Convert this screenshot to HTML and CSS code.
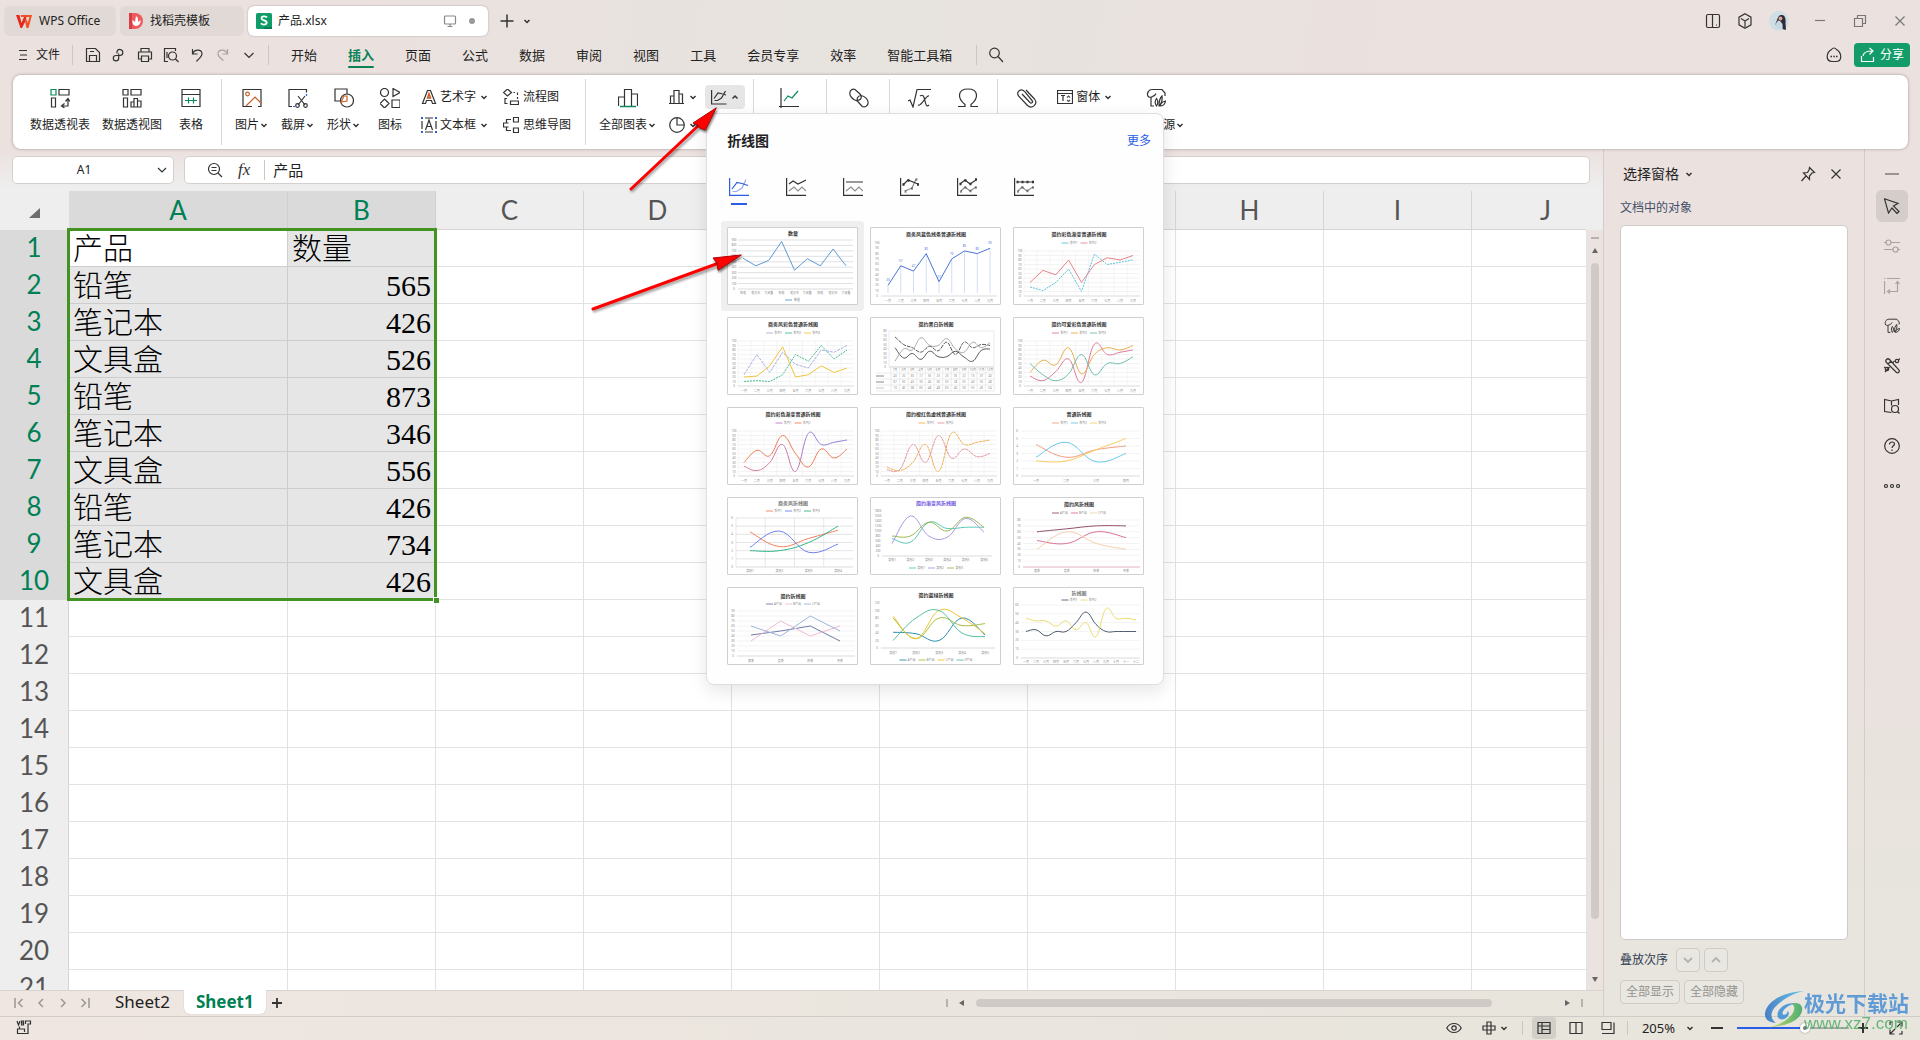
FILE: index.html
```html
<!DOCTYPE html>
<html lang="zh-CN">
<head>
<meta charset="utf-8">
<title>产品.xlsx - WPS Office</title>
<link rel="stylesheet" href="styles.css">
</head>
<body>
<svg class="defs" aria-hidden="true">
  <symbol id="chev" viewBox="0 0 10 10"><path d="M2.500 4l2.500 2.500L7.500 4" stroke-width="1.500"/></symbol>
  <symbol id="chev-up" viewBox="0 0 10 10"><path d="M2.500 6.500L5 4l2.500 2.500" stroke-width="1.500"/></symbol>
  <symbol id="chev-lg" viewBox="0 0 16 16"><path d="M3.500 6L8 10.500 12.500 6"/></symbol>
  <symbol id="close" viewBox="0 0 16 16"><path d="M3.500 3.500l9 9M12.500 3.500l-9 9"/></symbol>
  <symbol id="resource" viewBox="0 0 20 20"><path d="M5 9.500V18h3M2.500 9C0 6 2.500 1.500 6 1.500h10l3 3.500v3M6.500 8.500C5 10 3 9.500 2 8M10 5.500c-1 2-2 3-4 3M10.500 18c-2-3-1.500-5.500 0-7.500 1.500 2 2 4.500 0 7.500zM13 17.500c0-4 .500-7 3-9.500.500 4-.500 7.500-3 9.500zM14 18c1-3 3-4.500 5.500-5-.500 3-2.500 5-5.500 5z"/></symbol>
</svg>

<header class="titlebar">
  <button class="doc-tab doc-tab-home"><svg class="i16" viewBox="0 0 16 16"><path d="M0 2h3.500l2 8L8 4h2.500L9 9l-3 6H4.500z" fill="#e8281c" stroke="none"/><path d="M5 2h11l-3.500 13h-2L9 8l1.500-2 1.200 4L13.500 4H5z" fill="#f4501f" stroke="none"/></svg>WPS Office</button>
  <button class="doc-tab doc-tab-docer"><svg class="i16" viewBox="0 0 16 16"><path d="M1 0h6a8 8 0 0 1 0 16H1z" fill="#f05a5e" stroke="none"/><path d="M1 0h3v16H1z" fill="#d93c44" stroke="none"/><path d="M8 3l2 2v4l2.500-2c.500 3-1 5.500-4.500 6-3-.500-4-3-3.500-6L7 9z" fill="#fff" stroke="none"/></svg>找稻壳模板</button>
  <div class="doc-tab doc-tab-active"><svg class="i16" viewBox="0 0 16 16"><rect width="16" height="16" rx="1.500" fill="#109c68" stroke="none"/><path d="M8 14h8v2H8z" fill="#0b7d50" stroke="none"/><path d="M11 4.500C10 3 5.500 2.800 5.500 5.300c0 2.600 5.200 1.600 5.200 4.300 0 2.500-4.500 2.400-5.700.700" stroke="#fff" stroke-width="1.800"/></svg>产品.xlsx
    <svg class="i14 push" viewBox="0 0 14 14"><rect x="1.500" y="2" width="11" height="8" rx="1" stroke="#888"/><path d="M4.500 12.500h5M7 10v2" stroke="#888"/></svg><span class="dot"></span></div>
  <button class="plain" aria-label="新建"><svg class="i16" viewBox="0 0 16 16"><path d="M8 1.500v13M1.500 8h13" stroke-width="1.500"/></svg></button>
  <button class="plain" aria-label="标签列表"><svg class="i10"><use href="#chev"/></svg></button>
  <div class="win">
    <button class="plain" aria-label="侧栏"><svg class="i16" viewBox="0 0 16 16"><rect x="1.500" y="1.500" width="13" height="13" rx="1.500"/><path d="M7.500 1.500v13M11 12h1"/></svg></button>
    <button class="plain" aria-label="应用"><svg class="i16" viewBox="0 0 16 16"><path d="M8 .800l6 3.400v7.600l-6 3.400-6-3.400V4.200zM8 14V8L4 5.500M8 8l4-2.500"/></svg></button>
    <svg class="i20" viewBox="0 0 20 20"><circle cx="10" cy="10" r="10" fill="#cfdee4" stroke="none"/><path d="M12 4c4-.500 5 3.500 4.500 8L17 19l-3.500-1C14 14 13 12 13 12l-5 2-2-.500C8 12 8 4.500 12 4z" fill="#30293a" stroke="none"/><path d="M9 9.500c2 0 3 1 3.500 2.500L12 18l-5-1-1-3z" fill="#c4d8e2" stroke="none"/><circle cx="11.500" cy="7.500" r="1.900" fill="#d9a890" stroke="none"/></svg>
    <button class="plain dim" aria-label="最小化"><svg class="i16" viewBox="0 0 16 16"><path d="M3 7.500h10"/></svg></button>
    <button class="plain dim" aria-label="还原"><svg class="i16" viewBox="0 0 16 16"><path d="M2.500 5.500h8v8h-8zM5.500 5.500v-3h8v8h-3"/></svg></button>
    <button class="plain dim" aria-label="关闭"><svg class="i16"><use href="#close"/></svg></button>
  </div>
</header>

<nav class="menubar">
  <button class="file"><svg class="i10" viewBox="0 0 10 10"><path d="M1 .500h8M2 5h7M1 9.500h8"/></svg>文件</button>
  <span class="vline"></span>
  <div class="quick">
    <button class="plain" aria-label="保存"><svg class="i16" viewBox="0 0 16 16"><path d="M1.500 1.500h9l4 4v9h-13zM4.500 14.500v-6h7v6M5 4.500h4"/></svg></button>
    <button class="plain" aria-label="输出"><svg class="i16" viewBox="0 0 16 16"><path d="M6 6.500V4.500a3 3 0 1 1 3 4H5a2.700 2.700 0 1 0 2.700 2.700V6.500"/></svg></button>
    <button class="plain" aria-label="打印"><svg class="i16" viewBox="0 0 16 16"><path d="M4 5V1.500h8V5M4 12H1.500V5h13v7H12M4.500 9h7v5.500h-7z"/></svg></button>
    <button class="plain" aria-label="打印预览"><svg class="i16" viewBox="0 0 16 16"><path d="M5 14.500H1.500v-13h11V4M4 11V5"/><circle cx="9.500" cy="9" r="4"/><path d="M12.500 12l3 3"/></svg></button>
    <button class="plain" aria-label="撤销"><svg class="i16" viewBox="0 0 16 16"><path d="M3.500 2v5h5M3.500 7c2-5 9-5 9.500-.500.200 3-3 5-5.500 8"/></svg></button>
    <button class="plain faint" aria-label="恢复"><svg class="i16" viewBox="0 0 16 16"><path d="M12.500 2v5h-5M12.500 7c-2-5-9-5-9.500-.500-.200 3 3 5 5.500 7"/></svg></button>
    <button class="plain" aria-label="更多命令"><svg class="i16"><use href="#chev-lg"/></svg></button>
  </div>
  <span class="vline"></span>
  <div class="menus">
    <button>开始</button><button class="on">插入</button><button>页面</button><button>公式</button><button>数据</button><button>审阅</button><button>视图</button><button>工具</button><button>会员专享</button><button>效率</button><button>智能工具箱</button>
  </div>
  <span class="vline"></span>
  <button class="plain find" aria-label="搜索"><svg class="i16" viewBox="0 0 16 16"><circle cx="6.500" cy="6" r="4.800"/><path d="M10 9.500l5 5.500"/></svg></button>
  <button class="plain push" aria-label="评论"><svg class="i16" viewBox="0 0 16 16"><path d="M5.500 2.500C7 .500 9 .500 10.500 2.500 16 6 16.500 14 10 14.500H6C-.500 14-.200 6 5.500 2.500z"/><path d="M4.500 9.500h1.500M7.300 9.500h1.500M10 9.500h1.500" stroke-width="1.700"/></svg></button>
  <button class="share"><svg class="i16" viewBox="0 0 16 16"><path d="M1.500 9v5.500h12V10M3 9c.500-3.500 3-5 9-5M9.500 1L13 4 9.500 7.500"/></svg>分享</button>
</nav>

<section class="ribbon">
  <div class="group g-table">
    <button class="tool"><svg class="i20" viewBox="0 0 20 20"><path d="M1 1.500h5V7H1z" stroke="#0a8a5a"/><path d="M9 1.500h10V7H9zM1.500 10h4v9h-4zM12 18h6v-7M14.500 15.500L11.500 18l3 2M15.500 13.500L18 10.500l2 3"/></svg><span>数据透视表</span></button>
    <button class="tool"><svg class="i20" viewBox="0 0 20 20"><path d="M1 1.500h5V7H1zM9 1.500h10V7H9zM1.500 10h4v9h-4zM9 19v-5h3v5zM12 19v-8.500h3.500V19M15.500 19v-6H19v6zM9 19h10"/></svg><span>数据透视图</span></button>
    <button class="tool"><svg class="i20" viewBox="0 0 20 20"><path d="M1 1.500h18v17H1zM1 6.500h18"/><path d="M4 12.500h12M7.500 9.500v6M12.500 9.500v6" stroke="#0a8a5a"/></svg><span>表格</span></button>
  </div>
  <div class="group g-media">
    <button class="tool"><svg class="i20" viewBox="0 0 20 20"><path d="M10 18.500H1v-17h18v17h-3"/><g stroke="#c8602a"><circle cx="5.500" cy="6" r="1.800"/><path d="M4 18l9-9 6 6"/></g></svg><span>图片<svg class="i10"><use href="#chev"/></svg></span></button>
    <button class="tool"><svg class="i20" viewBox="0 0 20 20"><path d="M4 18.500H1v-17h17.500v3"/><path d="M5 18.500h2M18.500 6v2" stroke="#2b5ce6"/><path d="M10 8l7 9M17 8l-7 9"/><circle cx="9.500" cy="17.500" r="1.800"/><circle cx="17.500" cy="17.500" r="1.800"/></svg><span>截屏<svg class="i10"><use href="#chev"/></svg></span></button>
    <button class="tool"><svg class="i20" viewBox="0 0 20 20"><path d="M6 13H1V1h12v5"/><circle cx="13" cy="12.500" r="6.500"/><path d="M7 14l3-6h3v5z" stroke="#c8602a"/></svg><span>形状<svg class="i10"><use href="#chev"/></svg></span></button>
    <button class="tool"><svg class="i20" viewBox="0 0 20 20"><circle cx="4.500" cy="4.500" r="4"/><path d="M13 .500v8l7-4zM4.500 11L9 15.500 4.500 20 0 15.500zM12 12h8v7.500h-8z"/></svg><span>图标</span></button>
    <div class="stack">
      <button class="row"><svg class="i16" viewBox="0 0 16 16"><path d="M1.500 14.500h3l1-3h5l1 3h3L9.500 1.500h-3z"/><path d="M6.500 9L8 4.500 9.500 9z" stroke="#d05a1e" stroke-width="1.500"/></svg>艺术字<svg class="i10"><use href="#chev"/></svg></button>
      <button class="row"><svg class="i16" viewBox="0 0 16 16"><path d="M1 4v8M15 4v8M4 1h8M4 15h8M4.500 13L8 3l3.500 10M6 9.500h4"/><g fill="#2b5ce6" stroke="none"><path d="M0 0h2v2H0zM14 0h2v2h-2zM0 14h2v2H0zM14 14h2v2h-2z"/></g></svg>文本框<svg class="i10"><use href="#chev"/></svg></button>
    </div>
    <div class="stack diagrams">
      <button class="row"><svg class="i16" viewBox="0 0 16 16"><path d="M4.500 0L8.500 3.500l-4 3.500L.500 3.500zM10.500 3.500H12M14.500 3.500V6M14.500 8v2M4 9.500H2v5h2.500M7.500 12h8v3.500h-8z"/></svg>流程图</button>
      <button class="row"><svg class="i16" viewBox="0 0 16 16"><path d="M10.500.500h5v4.500h-5zM10.500 11h5v4.500h-5zM5.500 6h-5v4h5M3.500 6V2.500H8M3.500 10v3.500H8"/></svg>思维导图</button>
    </div>
  </div>
  <div class="group g-chart">
    <button class="tool"><svg class="i20" viewBox="0 0 20 20"><path d="M.500 18V9h6M6.500 18V1.500h7V18M13.500 6h6v12"/><path d="M2 18.500h16" stroke="#0a8a5a" stroke-width="1.500"/></svg><span>全部图表<svg class="i10"><use href="#chev"/></svg></span></button>
    <div class="stack">
      <button class="row" aria-label="柱形图"><svg class="i16" viewBox="0 0 16 16"><path d="M0 14.500h15M1.500 14.500V7H5M5 14.500V1.500h5v13M10 5h3.500v9.500"/></svg><svg class="i10"><use href="#chev"/></svg></button>
      <button class="row" aria-label="饼图"><svg class="i16" viewBox="0 0 16 16"><circle cx="8" cy="8" r="7.300"/><path d="M8 .700V8h7.300"/></svg><svg class="i10"><use href="#chev"/></svg></button>
    </div>
    <div class="dropdown">
      <button class="row pressed" aria-label="折线图"><svg class="i16" viewBox="0 0 16 16"><path d="M.600 1v14H15.500M3 9.500L7 4l3 .500 5 1.500M3.500 11.500h3L10.500 9l4-7"/></svg><svg class="i10"><use href="#chev-up"/></svg></button>
      <div class="popup">
        <div class="popup-head"><h2>折线图</h2><a href="#">更多</a></div>
        <div class="kinds">
          <button class="on" aria-label="折线图"><svg class="i20" viewBox="0 0 20 20"><path d="M.600 1v17.400H20"/><path d="M3 12l5-6.500 5 1 6 2"/><path d="M3.500 14.500h4L13 11l4-8.500" opacity=".5"/></svg></button>
          <button aria-label="堆积折线图"><svg class="i20" viewBox="0 0 20 20"><path d="M.600 1v17.400H20M3 7l4-3 5 3 8-4"/><path d="M3 14l5-4 4 4 4-4 4 4" opacity=".55"/></svg></button>
          <button aria-label="百分比堆积折线图"><svg class="i20" viewBox="0 0 20 20"><path d="M.600 1v17.400H20M3 5h17"/><path d="M3 14l5-4 4 4 4-4 4 4" opacity=".55"/></svg></button>
          <button aria-label="带标记的折线图"><svg class="i20" viewBox="0 0 20 20"><path d="M.600 1v17.400H20M3 8l5-5 10 4"/><path d="M5 14l7-3 4-9" opacity=".55"/><path d="M2.500 7.500h2M7.500 3.500h2M17 7.500h2" stroke-width="2.500"/><path d="M4.500 14.500h2M11 11.500h2M15.500 2.500h2" stroke-width="2.500" opacity=".55"/></svg></button>
          <button aria-label="带标记的堆积折线图"><svg class="i20" viewBox="0 0 20 20"><path d="M.600 1v17.400H20M3 7l5-4 5 4 6-4"/><path d="M4 14l4-4 5 4 6-4" opacity=".55"/><path d="M2.500 7h2M7.500 3.500h2M12.500 7h2M18 2.500h2" stroke-width="2.500"/><path d="M3 14.500h2M7.500 10.500h2M12.500 14h2M18 10.500h2" stroke-width="2.500" opacity=".55"/></svg></button>
          <button aria-label="带标记的百分比堆积折线图"><svg class="i20" viewBox="0 0 20 20"><path d="M.600 1v17.400H20M3 5h17"/><path d="M4 14l4-4 5 4 6-4" opacity=".55"/><path d="M2.500 5h2M7.500 5h2M12.500 5h2M18 5h2" stroke-width="2.500"/><path d="M3 14.500h2M7.500 10.500h2M12.500 14h2M18 10.500h2" stroke-width="2.500" opacity=".55"/></svg></button>
        </div>
        <div class="thumbs" id="thumbs"></div>
      </div>
    </div>
  </div>
  <div class="group g-one"><button class="tool" aria-label="迷你图"><svg class="i20" viewBox="0 0 20 20"><path d="M2 0v20M0 18.500h20"/><path d="M5 13l4-5 4 2 6-7" stroke="#0a8a5a"/></svg></button></div>
  <div class="group g-link"><button class="tool" aria-label="超链接"><svg class="i20" viewBox="0 0 20 20"><path d="M8 13C4 12 .500 8 .800 5 1 2 3.500 .500 6 1.500L11 6c2.500 2.500 1 7-2.500 6M12 7.500c4 .500 7 4 7.200 7 0 3.500-3.500 5-6 4l-4-4.500C7 11.500 8.500 7.500 12 7.500z"/></svg></button></div>
  <div class="group g-sym">
    <button class="tool" aria-label="公式"><svg class="i24" viewBox="0 0 24 20"><path d="M0 13l2-1 3 7L9 1.500h14M12 8c3-2 4 0 5 5s2 6 4 4M21 8c-3-1-8 11-11 9"/></svg></button>
    <button class="tool" aria-label="符号"><svg class="i20" viewBox="0 0 20 20"><path d="M0 18.500h7v-2C-1 10-.500 1 10 1s11 9 3 15.500v2h7"/></svg></button>
  </div>
  <div class="group g-last">
    <button class="tool" aria-label="附件"><svg class="i20" viewBox="0 0 20 20"><path d="M5 6l8 8.500c1.500 1.500 3.500-.500 2-2L8 4C5-.500-1.500 3 1.500 8l9 9.500c4.500 4 11-1.500 7-6.500L9 2"/></svg></button>
    <div class="stack"><button class="row"><svg class="i16" viewBox="0 0 16 16"><path d="M.500 1.500h15v13H.500zM.500 4.500h15M4 6.500h4M6 6.500V12"/><path d="M10 8.500L11.500 7 13 8.500M10 11l1.500 1.500L13 11" stroke="#555"/></svg>窗体<svg class="i10"><use href="#chev"/></svg></button></div>
    <button class="tool"><svg class="i20"><use href="#resource"/></svg><span>稻壳资源<svg class="i10"><use href="#chev"/></svg></span></button>
  </div>
</section>

<main class="work">
  <section class="book">
    <div class="formula">
      <div class="namebox"><input type="text" value="A1" aria-label="名称框"><svg class="i14" viewBox="0 0 14 14"><path d="M3 5l4 4 4-4"/></svg></div>
      <div class="fxbar"><svg class="i16" viewBox="0 0 16 16"><circle cx="7" cy="7" r="5.500"/><path d="M11 11l4 4M4.500 5.500h5M4.500 8.500h5"/></svg><i class="fx">fx</i><span class="vline"></span><input type="text" value="产品" aria-label="编辑栏"></div>
    </div>
    <div class="sheet">
      <div class="cells">
        <table>
          <colgroup><col class="c-num"><col class="c-a"><col><col><col><col><col><col><col><col><col></colgroup>
          <thead><tr><th class="corner"><svg class="i14" viewBox="0 0 14 14"><path d="M12 2v10H1z" fill="#6e6e6e" stroke="none"/></svg></th><th class="hit">A</th><th class="hit">B</th><th>C</th><th>D</th><th>E</th><th>F</th><th>G</th><th>H</th><th>I</th><th>J</th></tr></thead>
          <tbody id="rows">
            <tr class="sel"><th>1</th><td class="cur">产品</td><td>数量</td></tr>
            <tr class="sel"><th>2</th><td>铅笔</td><td class="num">565</td></tr>
            <tr class="sel"><th>3</th><td>笔记本</td><td class="num">426</td></tr>
            <tr class="sel"><th>4</th><td>文具盒</td><td class="num">526</td></tr>
            <tr class="sel"><th>5</th><td>铅笔</td><td class="num">873</td></tr>
            <tr class="sel"><th>6</th><td>笔记本</td><td class="num">346</td></tr>
            <tr class="sel"><th>7</th><td>文具盒</td><td class="num">556</td></tr>
            <tr class="sel"><th>8</th><td>铅笔</td><td class="num">426</td></tr>
            <tr class="sel"><th>9</th><td>笔记本</td><td class="num">734</td></tr>
            <tr class="sel"><th>10</th><td>文具盒</td><td class="num">426</td></tr>
          </tbody>
        </table>
        <div class="marquee"></div>
      </div>
      <div class="vscroll"><span class="split"></span><svg class="i10" viewBox="0 0 10 10"><path d="M5 2l3 5H2z" fill="#666" stroke="none"/></svg><span class="bar"></span><svg class="i10" viewBox="0 0 10 10"><path d="M5 8l3-5H2z" fill="#666" stroke="none"/></svg></div>
    </div>
    <div class="tabs">
      <div class="tabnav">
        <button class="plain" aria-label="首个"><svg class="i12" viewBox="0 0 12 12"><path d="M2 1v10M9.500 2L5.500 6l4 4"/></svg></button>
        <button class="plain" aria-label="上一个"><svg class="i12" viewBox="0 0 12 12"><path d="M8 2L4 6l4 4"/></svg></button>
        <button class="plain" aria-label="下一个"><svg class="i12" viewBox="0 0 12 12"><path d="M4 2l4 4-4 4"/></svg></button>
        <button class="plain" aria-label="末个"><svg class="i12" viewBox="0 0 12 12"><path d="M10 1v10M2.500 2l4 4-4 4"/></svg></button>
      </div>
      <button class="tab">Sheet2</button><button class="tab on">Sheet1</button>
      <button class="plain add" aria-label="新建工作表"><svg class="i12" viewBox="0 0 12 12"><path d="M6 1v10M1 6h10" stroke-width="1.800"/></svg></button>
      <div class="hscroll"><span class="tick"></span><svg class="i10" viewBox="0 0 10 10"><path d="M2 5l5-3v6z" fill="#666" stroke="none"/></svg><span class="bar"></span><svg class="i10" viewBox="0 0 10 10"><path d="M8 5L3 2v6z" fill="#666" stroke="none"/></svg><span class="tick"></span></div>
    </div>
  </section>

  <aside class="pane">
    <div class="pane-head"><h2>选择窗格</h2><svg class="i10"><use href="#chev"/></svg>
      <button class="plain push" aria-label="固定"><svg class="i16" viewBox="0 0 16 16"><path d="M9.500 1.500l5 5-2.500.500-2.500 3v3.500l-6-6.500 4-.500L9 4zM6 10l-4.500 5"/></svg></button>
      <button class="plain" aria-label="关闭窗格"><svg class="i16"><use href="#close"/></svg></button></div>
    <p>文档中的对象</p>
    <div class="objects"></div>
    <div class="order"><span>叠放次序</span><button disabled aria-label="下移"><svg class="i16" viewBox="0 0 16 16"><path d="M4 6l4 4 4-4" stroke-width="1.800"/></svg></button><button disabled aria-label="上移"><svg class="i16" viewBox="0 0 16 16"><path d="M4 10l4-4 4 4" stroke-width="1.800"/></svg></button></div>
    <div class="allbtns"><button disabled>全部显示</button><button disabled>全部隐藏</button></div>
  </aside>

  <aside class="rail">
    <button class="dash" aria-label="收起"></button>
    <button class="on" aria-label="选择"><svg class="i16" viewBox="0 0 16 16"><path d="M.500 .800L14 5.500 9.500 8l5.500 5.500-2 2L8 10l-3.500 5z"/></svg></button>
    <button class="faint" aria-label="属性"><svg class="i16" viewBox="0 0 16 16"><circle cx="4.500" cy="4.500" r="2.500"/><circle cx="11.500" cy="11.500" r="2.500"/><path d="M0 4.500h2M7 4.500h9M0 11.500h9M14 11.500h2"/></svg></button>
    <button class="faint" aria-label="分析"><svg class="i16" viewBox="0 0 16 16"><path d="M3 .500h13M.500 3v13M0 .500h1.500M4 13.500h9.500v-9M6 11.500l-2.500 2L6 15.500M11.500 6L13.500 3.500 15.500 6"/></svg></button>
    <button aria-label="资源"><svg class="i16"><use href="#resource"/></svg></button>
    <button aria-label="工具箱"><svg class="i16" viewBox="0 0 16 16"><path d="M2.500 4.500a2 2 0 0 1 3-3L15 12a1.800 1.800 0 0 1-2.500 2.500zM4 6l3-3"/><circle cx="13" cy="3" r="1.700"/><circle cx="3" cy="11" r="1.700"/><path d="M10.500 3L9 4.500M1 14l4.500-5M16 .500l-1.500 1.500M0 9l1.500 1"/></svg></button>
    <button aria-label="查阅"><svg class="i16" viewBox="0 0 16 16"><path d="M7.500 14.500L.500 13.500V1.500L7.500 3l7-1.500V7M7.500 3v4.500"/><circle cx="11" cy="11" r="3.500"/><path d="M13.500 13.500l2 2"/></svg></button>
    <button aria-label="帮助"><svg class="i16" viewBox="0 0 16 16"><circle cx="8" cy="8" r="7.300"/><path d="M5.500 6.500c0-3.500 5-3 5-.500 0 1.800-2.500 1.800-2.500 4M8 11.500V13"/></svg></button>
    <button aria-label="更多"><svg class="i16" viewBox="0 0 16 16"><circle cx="2" cy="8" r="1.500"/><circle cx="8" cy="8" r="1.500"/><circle cx="14" cy="8" r="1.500"/></svg></button>
  </aside>
</main>

<footer class="status">
  <button class="plain" aria-label="宏"><svg class="i16" viewBox="0 0 16 16"><path d="M1 1l1.500 4L4 1M5.500 1v4h2V1zM5.500 3h2M9.500 4V1h5v3h-2.500v9.500H1.500V9h7v3M3.500 9V6.500"/></svg></button>
  <div class="status-right">
    <button class="plain" aria-label="护眼"><svg class="i16" viewBox="0 0 16 16"><path d="M.800 8C4 2 12 2 15.200 8 12 14 4 14 .800 8z"/><circle cx="8" cy="8" r="2.200"/></svg></button>
    <button class="plain mode" aria-label="阅读模式"><svg class="i14" viewBox="0 0 14 14"><path d="M5 5V1h4v4h4v4H9v4H5V9H1V5zM5 5h4v4H5z"/></svg><svg class="i10"><use href="#chev"/></svg></button>
    <span class="vline"></span>
    <div class="views">
      <button class="plain on" aria-label="普通视图"><svg class="i14" viewBox="0 0 14 14"><path d="M1 1.500h12v11H1zM1 5h12M5 1.500v11M5 8.500h8" /></svg></button>
      <button class="plain" aria-label="分页预览"><svg class="i14" viewBox="0 0 14 14"><path d="M1 1.500h12v11H1zM7 1.500v11"/></svg></button>
      <button class="plain" aria-label="页面布局"><svg class="i14" viewBox="0 0 14 14"><path d="M1 1.500h9v7H1zM1 12.500h12v-11M10 8.500v-2"/></svg></button>
    </div>
    <span class="vline"></span>
    <button class="zoomval">205%<svg class="i10"><use href="#chev"/></svg></button>
    <button class="plain" aria-label="缩小"><svg class="i12" viewBox="0 0 12 12"><path d="M0 6h12" stroke-width="2"/></svg></button>
    <input type="range" min="0" max="100" value="62" aria-label="缩放">
    <button class="plain" aria-label="放大"><svg class="i12" viewBox="0 0 12 12"><path d="M6 1v10M1 6h10" stroke-width="2"/></svg></button>
    <button class="plain full" aria-label="全屏"><svg class="i14" viewBox="0 0 14 14"><path d="M8.500 1H13v4.500M5.500 13H1V8.500M13 1L8 6M1 13l5-5M1 4V1h3M13 10v3h-3"/></svg></button>
  </div>
</footer>

<svg class="arrows" width="160" height="210" viewBox="0 0 160 210" aria-hidden="true">
  <g class="shadow"><path d="M42 84L110 21"/><path d="M4 204l128-46"/></g>
  <path d="M41 82L109 18M3 202l126-46"/>
  <path d="M126 1L103 16l5 2 2 3 5 2zM151 148l-28 3 4 5 1 7z" class="head"/>
</svg>

<div class="brand">
  <svg width="48" height="40" viewBox="0 0 48 44" aria-hidden="true">
    <defs><linearGradient id="bl" x2="1"><stop stop-color="#2f6fc0"/><stop offset="1" stop-color="#56c2ee"/></linearGradient><linearGradient id="gr" x2="1"><stop stop-color="#c2d850"/><stop offset="1" stop-color="#34a560"/></linearGradient></defs>
    <path d="M46 1C24 2 5 12 3 26c0 7 5 10 12 10-7-5-6-13 1-19C23 10 33 4 46 1z" fill="url(#bl)" stroke="none"/>
    <path d="M8 41c20-1 36-9 36-20 0-6-6-8-12-6 5 2 4 9-1 14-6 6-14 10-23 12z" fill="url(#gr)" stroke="none"/>
    <path d="M36 15c-8-2-18 4-19 11-1 6 4 8 9 5 4-3 4-7 2-8 0 3-3 5-5 4-3-3 5-11 13-12z" fill="#3a8fd6" stroke="none"/>
  </svg>
  <div><b>极光下载站</b><span>www.xz7.com</span></div>
</div>
<script src="charts.js"></script>
</body>
</html>
```

FILE: styles.css
```css
*, *::before, *::after { box-sizing: border-box; }
html, body { height: 100%; }
body {
  margin: 0; display: flex; flex-direction: column; position: relative; overflow: hidden;
  font: 12px/16px "Noto Sans", "Noto Sans CJK SC", sans-serif; color: #222;
  background: linear-gradient(100deg, transparent 15%, rgba(229,228,222,.7) 45%, transparent 75%) top / 100% 75px no-repeat,
    linear-gradient(180deg, #ebe1df 0, #ebe1df 55%, #e7e5dd 90%, #e7e5dd 100%);
}
button, input { font: inherit; color: inherit; margin: 0; }
button { border: 0; background: none; padding: 0; display: flex; align-items: center; white-space: nowrap; }
h2, p { margin: 0; }
svg { fill: none; stroke: #333; stroke-width: 1.2; flex: none; display: block; }
svg.defs { position: absolute; width: 0; height: 0; }
.i10 { width: 10px; height: 10px; }
.i12 { width: 12px; height: 12px; }
.i14 { width: 14px; height: 14px; }
.i16 { width: 16px; height: 16px; }
.i20 { width: 20px; height: 20px; }
.i24 { width: 24px; height: 20px; }
.push { margin-left: auto; }
.plain { justify-content: center; }
.dim svg { stroke: #777; }
.faint svg { stroke: #aaa2a0; }
.vline { width: 1px; height: 20px; background: #cdc7c4; flex: none; }

/* title bar */
.titlebar { display: flex; align-items: center; height: 41px; padding: 0 12px 0 4px; flex: none; }
.doc-tab { display: flex; align-items: center; height: 30px; border-radius: 6px; background: #e0d9d5; margin-right: 4px; padding: 0 12px; gap: 7px; }
.doc-tab-home { width: 112px; }
.doc-tab-docer { width: 124px; padding-left: 8px; gap: 6px; }
.doc-tab-active { width: 240px; background: #fff; padding: 0 12px 0 8px; gap: 6px; box-shadow: 0 0 2px rgba(0,0,0,.3); margin-right: 11px; }
.dot { width: 6px; height: 6px; border-radius: 50%; background: #999; margin: 0 1px 0 6px; }
.titlebar > .plain { margin-right: 7px; }
.win { display: flex; align-items: center; margin-left: auto; gap: 24px; }
.win .plain:first-child { margin-right: -8px; }
.win .plain:nth-child(2) { margin-right: -8px; }
.win .dim { width: 16px; }
.win .dim:nth-child(4) { margin: 0 0 0 -1px; }

/* menu bar */
.menubar { display: flex; align-items: center; height: 29px; padding: 0 10px 2px 18px; margin-bottom: 5px; flex: none; }
.file { gap: 8px; margin-right: 12px; }
.quick { display: flex; gap: 10px; padding: 0 11px 0 12px; }
.menus { display: flex; gap: 31px; padding: 0 24px 0 22px; font-size: 13px; line-height: 18px; }
.menus button { position: relative; }
.menus .on { color: #0a8256; font-weight: 700; }
.menus .on::after { content: ""; position: absolute; left: 0; right: 0; bottom: -4px; height: 2px; background: #0a8256; border-radius: 1px; }
.find { margin-left: 11px; }
.share { margin-left: 12px; width: 56px; height: 24px; border-radius: 4px; background: #139b69; color: #fff; justify-content: center; gap: 4px; }
.share svg { stroke: #fff; }

/* ribbon */
.ribbon { display: flex; height: 74px; margin: 0 12px 0 13px; flex: none; position: relative; z-index: 5; background: #fff; border-radius: 8px; box-shadow: 0 0 3px rgba(90,70,65,.5); }
.group { display: flex; align-items: flex-start; gap: 12px; padding: 13px 12px 0; position: relative; }
.group + .group::before { content: ""; position: absolute; left: 0; top: 4px; width: 1px; height: 66px; background: #d9d9d9; }
.tool { flex-direction: column; gap: 9px; min-width: 34px; color: #1d1d1d; }
.tool span { display: flex; align-items: center; }
.g-table { padding-left: 17px; padding-right: 13px; }
.g-media { padding-left: 14px; padding-right: 14px; }
.g-chart { padding: 13px 8px 0 14px; }
.stack { display: flex; flex-direction: column; gap: 8px; margin-top: -1px; }
.g-media .stack { margin-left: 2px; }
.row { height: 20px; gap: 3px; }
.diagrams .row { gap: 4px; }
.dropdown { position: relative; margin: -3px 0 0 -5px; }
.pressed { width: 40px; height: 24px; padding-left: 6px; background: #e6e6e6; border-radius: 4px; }
.g-one { padding: 13px 19px 0 18px; }
.g-link { padding: 13px 12px 0 15px; }
.g-sym { padding: 13px 11px 0 13px; }
.g-last { gap: 12px; }
.g-last .tool:last-child { margin-left: 2px; }
.g-one .tool, .g-link .tool, .g-sym .tool, .g-last .tool { min-width: 36px; }

/* chart gallery */
.popup { position: absolute; z-index: 10; left: 1px; top: 28px; width: 458px; padding: 17px 19px 19px 20px; background: #fefefe; border: 1px solid #dedede; border-radius: 8px; box-shadow: 0 6px 18px rgba(0,0,0,.1); }
.popup-head { display: flex; align-items: center; justify-content: space-between; height: 20px; }
.popup-head h2 { font-size: 14px; font-weight: 700; }
.popup-head a { color: #2b5ce6; text-decoration: none; margin-right: -7px; }
.kinds { display: flex; gap: 37px; padding-left: 2px; margin: 26px 0 22px; }
.kinds button { height: 28px; align-items: flex-start; position: relative; }
.kinds .on svg { stroke: #2b5ce6; }
.kinds .on::after { content: ""; position: absolute; left: 2px; right: 2px; bottom: 0; height: 2px; background: #2b5ce6; }
.thumbs { display: grid; grid-template-columns: repeat(3, 131px); gap: 12px; }
.thumbs button { border: 1px solid #d0d0d0; background: #fff; height: 78px; border-radius: 1px; }
.thumbs .on { box-shadow: 0 0 0 6px #efefef; }
.thumbs svg { width: 129px; height: 76px; font-family: "Noto Sans", "Noto Sans CJK SC", sans-serif; }
.thumbs text { stroke: none; fill: #8a8a8a; font-size: 3px; text-anchor: middle; }
.thumbs .t { font-size: 5px; font-weight: 700; }

/* work area */
.work { flex: 1; min-height: 0; display: flex; }
.book { flex: 1; min-width: 0; display: flex; flex-direction: column; background: linear-gradient(#ebe1df 0, #eee 40px); }
.formula { display: flex; gap: 10px; padding: 7px 13px 7px 12px; height: 42px; flex: none; }
.namebox, .fxbar { background: #fff; border: 1px solid #d6d0cd; border-radius: 5px; display: flex; align-items: center; }
.namebox { width: 162px; padding-right: 4px; }
.formula input { border: 0; outline: 0; background: none; min-width: 0; flex: 1; padding: 0; }
.namebox input { text-align: center; }
.fxbar { flex: 1; padding-left: 22px; }
.fx { font: italic 17px/20px "Liberation Serif", serif; margin: 0 14px 0 15px; color: #333; }
.fxbar input { padding-left: 8px; font-size: 15px; }
.sheet { flex: 1; min-height: 0; display: flex; }
.cells { flex: 1; min-width: 0; overflow: hidden; position: relative; }
.cells table { table-layout: fixed; width: 1620px; border-collapse: separate; border-spacing: 0; }
col { width: 148px; }
.c-num { width: 69px; }
.c-a { width: 219px; }
th { font: 26px/34px Lato, "Noto Sans", sans-serif; color: #555; background: #eee; padding: 0; border: solid #d4d4d4; border-width: 0 1px 1px 0; }
thead th { height: 39px; }
.corner svg { margin: 6px 0 0 28px; }
thead .hit { background: #dadada; border-right-color: #cfcfcf; color: #008055; }
thead .corner { border-color: #eee; }
tbody th { height: 37px; padding-bottom: 2px; border-bottom-color: #eee; }
.sel th { background: #dadada; color: #008055; border-color: #dadada; }
td { background: #fff; border: solid #e2e2e2; border-width: 0 1px 1px 0; padding: 2px 4px 0; height: 37px; font: 300 30px/34px "Liberation Serif", "Noto Sans CJK SC", serif; color: #000; white-space: nowrap; overflow: hidden; }
.sel td:nth-child(2), .sel td:nth-child(3) { background: #e6e6e6; border-color: #cdcdcd; }
.sel td.cur { background: #fff; }
.num { text-align: right; }
.marquee { position: absolute; left: 67px; top: 37px; width: 370px; height: 373px; border: 3px solid #429321; }
.marquee::after { content: ""; position: absolute; right: -5px; bottom: -5px; width: 6px; height: 6px; background: #429321; border: solid #fff; border-width: 1px 0 0 1px; }
.vscroll { width: 17px; margin-top: 39px; background: #eae3df; display: flex; flex-direction: column; align-items: center; padding: 7px 0 6px; gap: 7px; border-left: 1px solid #e2e2e2; }
.split { width: 8px; height: 2px; background: #b9b1ae; }
.vscroll .bar { width: 8px; flex: 1; margin-bottom: 48px; background: #cfcac6; border-radius: 4px; }

/* sheet tabs */
.tabs { height: 26px; flex: none; display: flex; align-items: flex-start; border-top: 1px solid #d9d4d0; background: linear-gradient(90deg, #efe6e1, #e8e5dd); }
.tabnav { display: flex; gap: 10px; padding-left: 13px; width: 101px; height: 24px; }
.tabnav svg { stroke: #9c9694; stroke-width: 1.5; }
.tab { height: 22px; padding: 0 14px; font-size: 17px; line-height: 22px; }
.tab.on { color: #008055; font-weight: 700; background: #fff; border-radius: 0 0 6px 6px; height: 24px; padding: 0 12px 1px; margin-top: -1px; box-shadow: 0 0 1px #aaa; }
.add { height: 24px; margin-left: 5px; }
.hscroll { margin-left: auto; width: 41%; height: 23px; display: flex; align-items: center; gap: 9px; padding-right: 20px; }
.hscroll .bar { height: 8px; width: 516px; margin-right: auto; background: #cfcac6; border-radius: 4px; }
.tick { width: 2px; height: 8px; background: #b9b1ae; }

/* selection pane */
.pane { width: 261px; flex: none; display: flex; flex-direction: column; padding: 16px 16px 12px; border-left: 1px solid #d3ccca; }
.pane-head { display: flex; align-items: center; height: 18px; padding: 0 4px 0 3px; gap: 5px; }
.pane-head h2 { font-size: 14px; font-weight: 400; line-height: 18px; }
.pane-head .plain + .plain { margin-left: 7px; }
.pane p { color: #44506b; margin: 17px 0 9px; }
.objects { flex: 1; background: #fff; border: 1px solid #cfcac7; border-radius: 5px; }
.order { display: flex; align-items: center; gap: 4px; margin: 8px 0; }
.order span { margin-right: 4px; color: #2f3a52; }
.order button, .allbtns button { height: 24px; border: 1px solid #cfccc7; border-radius: 4px; justify-content: center; background: #e9e7e2; color: #96938f; }
.order button { width: 24px; }
.order svg { stroke: #b5b2ad; }
.allbtns { display: flex; gap: 4px; }
.allbtns button { width: 60px; }

/* tool rail */
.rail { width: 56px; flex: none; display: flex; flex-direction: column; align-items: center; gap: 8px; padding: 24px 2px 0 0; border-left: 1px solid #d3ccca; }
.rail button { width: 32px; height: 32px; border-radius: 6px; justify-content: center; }
.rail .on { background: #d5cdca; }
.rail .dash { width: 14px; height: 2px; background: #9a9492; border-radius: 0; margin-bottom: 7px; }

/* status bar */
.status { height: 24px; flex: none; display: flex; align-items: center; padding: 0 17px 2px 16px; border-top: 1px solid #d0cbc7; background: linear-gradient(90deg, #efe6e1, #e8e5dd 75%); }
.status-right { margin-left: auto; display: flex; align-items: center; }
.status .vline { height: 14px; }
.mode { margin: 0 13px 0 20px; gap: 3px; }
.views { display: flex; gap: 8px; margin: 0 7px 0 9px; }
.views .plain { width: 24px; height: 22px; border-radius: 4px; }
.views .on { background: #d2cfc8; }
.zoomval { gap: 10px; font-size: 13px; margin: 0 16px 0 14px; }
.status input { -webkit-appearance: none; appearance: none; width: 112px; height: 10px; margin: 0 8px 0 14px; background: linear-gradient(90deg, #2b5ce6 62%, #aaa 62%) center / 100% 2px no-repeat; }
.status input::-webkit-slider-thumb { -webkit-appearance: none; width: 10px; height: 10px; border-radius: 50%; background: #777; border: 3px solid #fff; box-shadow: 0 0 2px rgba(0,0,0,.4); }
.full { margin-left: 20px; }

/* annotations lying over the window */
.arrows { position: absolute; left: 590px; top: 107px; z-index: 10; pointer-events: none; stroke: #f00; stroke-width: 3; stroke-linecap: round; }
.arrows .shadow { stroke: rgba(0,0,0,.35); filter: blur(1px); }
.arrows .head { fill: #f00; stroke: #b00000; stroke-width: 1; filter: drop-shadow(1px 2px 1px rgba(0,0,0,.5)); }
.brand { position: absolute; right: 10px; bottom: 7px; z-index: 10; display: flex; pointer-events: none; opacity: .85; }
.brand div { display: flex; flex-direction: column; width: 106px; margin: 1px 0 0 -4px; }
.brand b { font-size: 21px; line-height: 24px; color: #4a8fd4; }
.brand span { font: 17px/18px "Liberation Sans", sans-serif; color: #4fae68; }
```

FILE: charts.js
```js
// Fill the grid with the empty cells that follow the data.
const body = document.getElementById('rows');
for (const tr of body.rows) while (tr.cells.length < 11) tr.insertCell();
for (let n = 11; n <= 21; n++) {
  const tr = body.insertRow();
  const th = document.createElement('th');
  th.textContent = n;
  tr.append(th);
  while (tr.cells.length < 11) tr.insertCell();
}

// Gallery previews. box: [left, right, top, bottom] of the plot; xs: first and last point.
const months = ['一月', '二月', '三月', '四月', '五月', '六月', '七月', '八月', '九月'];
const cats = n => Array.from({ length: n }, (_, i) => '类别' + (i + 1));
const nine = { box: [10, 126, 23, 68], xs: [16, 119], max: 100, step: 10, labels: months, ly: 73, vgrid: true };
const items = ['铅笔', '笔记本', '文具盒'];
const seasons = ['春季', '夏季', '秋季', '冬季'];
const charts = [
  { title: '数量', ty: 5, box: [10, 125, 12, 61], xs: [15, 118], max: 900, step: 100, labels: [...items, ...items, ...items], ly: 65, grid: '#d4d4d4', on: true,
    legend: ['数量'], gy: 72, s: [['#5b9bd5', [565, 426, 526, 873, 346, 556, 426, 734, 426]]] },
  { title: '商务风蓝色线条普通折线图', box: [10, 126, 15, 68], xs: [17, 119], max: 100, step: 10, labels: months, ly: 73, grid: 'none', drops: true,
    s: [['#4a74d8', [20, 57, 47, 80, 27, 70, 85, 80, 90]]] },
  { ...nine, title: '简约彩色渐变普通折线图', legend: ['系列1', '系列2'],
    s: [['#5cc4dc', [20, 12, 30, 60, 10, 93, 70, 75, 80], '2 1'], ['#e8838c', [30, 57, 47, 80, 30, 70, 85, 80, 90]]] },
  { ...nine, title: '商务风彩色普通折线图', legend: ['系列1', '系列2', '系列3'],
    s: [['#a9b0e2', [25, 70, 30, 75, 48, 40, 80, 75, 90], '3 1'], ['#43bd92', [10, 12, 10, 25, 70, 55, 90, 60, 80], '2 1'], ['#f0c63e', [20, 22, 45, 87, 20, 25, 45, 30, 40]]] },
  { title: '简约黑白折线图', box: [18, 123, 13, 49], xs: [24, 119], max: 80, step: 10, labels: Array.from({ length: 12 }, (_, i) => i + 1 + '月'), ly: 52, smooth: true, table: true, grid: 'none',
    s: [['#555', [43, 20, 30, 17, 35, 23, 23, 35, 22, 13, 37, 40]], ['#555', [67, 50, 43, 33, 46, 36, 55, 28, 55, 43, 50, 48], '4 1'], ['#aaa', [13, 40, 38, 65, 48, 48, 63, 40, 33, 55, 43, 54]]] },
  { ...nine, title: '简约可爱彩色普通折线图', legend: ['系列1', '系列2', '系列3'], smooth: true,
    s: [['#e07a9a', [22, 12, 32, 60, 8, 93, 70, 75, 80]], ['#e8b04c', [30, 57, 47, 85, 27, 70, 85, 80, 90]], ['#6fbfae', [50, 25, 12, 27, 70, 25, 50, 50, 65]]] },
  { ...nine, title: '简约彩色渐变普通折线图', legend: ['系列1', '系列2'], smooth: true,
    s: [['url(#fade)', [22, 12, 30, 70, 10, 95, 70, 75, 80]], ['#ec8058', [30, 57, 45, 90, 50, 20, 60, 40, 60]]] },
  { ...nine, title: '简约橙红色虚线普通折线图', legend: ['系列1', '系列2'], smooth: true,
    s: [['#f0b04c', [20, 12, 30, 70, 10, 95, 70, 75, 80], '3 .6'], ['#e0949c', [14, 15, 70, 30, 90, 40, 60, 43, 50], '3 .6']] },
  { title: '普通折线图', legend: ['系列1', '系列2', '系列3'], box: [7, 126, 23, 68], xs: [22, 112], max: 6, step: 1, labels: months.slice(0, 4), ly: 73, smooth: true,
    s: [['#f29d84', [4.2, 2.5, 3.5, 4]], ['#68cbe8', [2.5, 4.5, 1.9, 3]], ['#f8cd62', [2, 2, 3.5, 5]]] },
  { title: '商务风折线图', ty: 5, gy: 13, light: true, legend: ['系列1', '系列2', '系列3'], box: [8, 125, 20, 69], xs: [22, 110], max: 6, step: 1, labels: cats(4), ly: 73, smooth: true, vgrid: true, grid: '#d8d8d8',
    s: [['#f57f60', [4.3, 2.5, 3.5, 4.5]], ['#7080f0', [2.4, 4.4, 1.8, 2.8]], ['#2fb687', [2, 2, 3, 5]]] },
  { title: '简约渐变风折线图', tc: '#6e54e0', ty: 5, gy: 70, legend: ['类别1', '类别2', '类别3'], box: [11, 121, 13, 58], xs: [21, 113], max: 1800, step: 200, labels: cats(6), ly: 62, smooth: true, grid: 'none', base: true,
    s: [['#58c8b4', [700, 550, 1350, 1100, 1150, 1150]], ['#a79be2', [500, 1600, 800, 750, 1500, 950]], ['#9cb850', [800, 800, 1350, 1000, 1550, 1150]]] },
  { title: '简约风折线图', ty: 6, gy: 15, legend: ['A产品', 'B产品', 'C产品'], box: [9, 126, 22, 69], xs: [23, 112], max: 80, step: 10, labels: seasons, ly: 73, smooth: true, axis: '#d292a0',
    s: [['#92506e', [60, 65, 70, 70]], ['#dc7094', [45, 40, 60, 50]], ['#f3d0ac', [30, 60, 40, 30]]] },
  { title: '简约折线图', ty: 8, gy: 16, legend: ['A产品', 'B产品', 'C产品'], box: [9, 127, 23, 68], xs: [23, 112], max: 90, step: 10, labels: seasons, ly: 73,
    s: [['#6e7ca8', [42, 50, 60, 30]], ['#f0bcd6', [30, 70, 40, 60]], ['#a0b4d8', [60, 40, 80, 50]]] },
  { title: '简约蓝绿折线图', ty: 7, gy: 72, legend: ['A产品', 'B产品', 'C产品', 'D产品'], box: [10, 124, 15, 60], xs: [22, 114], max: 120, step: 20, labels: cats(5), ly: 65, smooth: true, grid: 'none', base: true,
    s: [['#2b90ae', [42, 38, 20, 80, 35]], ['#a8bc40', [80, 25, 80, 60, 65]], ['#f2c42c', [85, 25, 100, 80, 38]], ['#54bfa0', [20, 80, 100, 40, 30]]] },
  { title: '折线图', ty: 5, gy: 12, light: true, legend: ['系列1', '系列2'], box: [7, 126, 17, 70], xs: [12, 122], max: 60, step: 10, labels: [...months, '十月', '十一', '十二'], ly: 74, smooth: true,
    s: [['#505a70', [30, 32, 25, 30, 30, 40, 52, 38, 30, 30, 30, 30]], ['#eadf70', [45, 42, 42, 36, 42, 32, 40, 24, 56, 45, 45, 43]]] },
];

function trace(p, smooth) {
  let d = `M${p[0]}`;
  for (let i = 1; i < p.length; i++) {
    if (!smooth) { d += `L${p[i]}`; continue; }
    const a = p[i - 2] || p[i - 1], b = p[i - 1], c = p[i], e = p[i + 1] || c, k = 5;
    d += `C${b[0] + (c[0] - a[0]) / k},${b[1] + (c[1] - a[1]) / k} ${c[0] - (e[0] - b[0]) / k},${c[1] - (e[1] - b[1]) / k} ${c}`;
  }
  return d;
}

function draw(c) {
  const [l, r, t, b] = c.box, n = c.labels.length;
  const X = i => c.xs[0] + (c.xs[1] - c.xs[0]) * i / (n - 1);
  const Y = v => b - (b - t) * v / c.max;
  const grid = c.grid || '#eee';
  let o = `<text class="t" x="65" y="${(c.ty || 6) + 2}" style="fill:${c.tc || (c.light ? '#777' : '#333')}">${c.title}</text>`;
  for (let v = 0; v <= c.max; v += c.step) {
    o += `<path d="M${l} ${Y(v)}H${r}" stroke="${v ? grid : c.axis || '#ccc'}" stroke-width=".7"/>`;
    o += `<text x="${l - 4}" y="${Y(v) + 1}">${v}</text>`;
  }
  if (c.vgrid) c.labels.forEach((_, i) => { const x = l + (r - l) * i / n; o += `<path d="M${x} ${t}V${b}" stroke="${grid}" stroke-width=".6"/>`; });
  c.labels.forEach((s, i) => { o += `<text x="${X(i)}" y="${c.ly + 1}">${s}</text>`; });
  if (c.drops) c.s[0][1].forEach((v, i) => {
    o += `<path d="M${X(i)} ${Y(v)}V${b - 3}" stroke="#c9d4f4" stroke-width=".8"/><text x="${X(i)}" y="${Y(v) - 4}" style="fill:#4a74d8">${v}</text>`;
  });
  if (c.table) {
    for (let k = 0; k < 4; k++) {
      o += `<path d="M5 ${55 + k * 6}H123" stroke="#ddd" stroke-width=".6"/>`;
      if (k < 3) {
        o += `<path d="M5 ${58 + k * 6}h8" stroke="${c.s[k][0]}" stroke-width=".7"/>`;
        c.s[k][1].forEach((v, i) => { o += `<text x="${X(i)}" y="${59 + k * 6}">${v}</text>`; });
      }
    }
    for (let i = 0; i <= 12; i++) o += `<path d="M${20 + i * 8.6} 50V73" stroke="#ddd" stroke-width=".6"/>`;
    o += `<path d="M${l} ${t}H${r}V${b}H${l}z" stroke="#ddd" stroke-width=".6"/>`;
  }
  for (const [color, values, dash] of c.s)
    o += `<path d="${trace(values.map((v, i) => [X(i), Y(v)]), c.smooth)}" stroke="${color}" stroke-width="1" ${dash ? `stroke-dasharray="${dash}"` : ''}/>`;
  (c.legend || []).forEach((s, i, all) => {
    const x = 65 + (i - (all.length - 1) / 2) * 19, y = c.gy || 15;
    o += `<path d="M${x - 8} ${y}h7" stroke="${c.s[i][0].startsWith('url') ? '#b878c8' : c.s[i][0]}" stroke-width=".9"/><text x="${x + 4}" y="${y + 1}">${s}</text>`;
  });
  return `<button class="${c.on ? 'on' : ''}" aria-label="${c.title}"><svg viewBox="0 0 129 76"><defs><linearGradient id="fade" gradientUnits="userSpaceOnUse" x1="10" y1="0" x2="120" y2="0"><stop offset=".4" stop-color="#d87a9e"/><stop offset=".7" stop-color="#8f7fd8"/></linearGradient></defs>${o}</svg></button>`;
}
document.getElementById('thumbs').innerHTML = charts.map(draw).join('');
```
